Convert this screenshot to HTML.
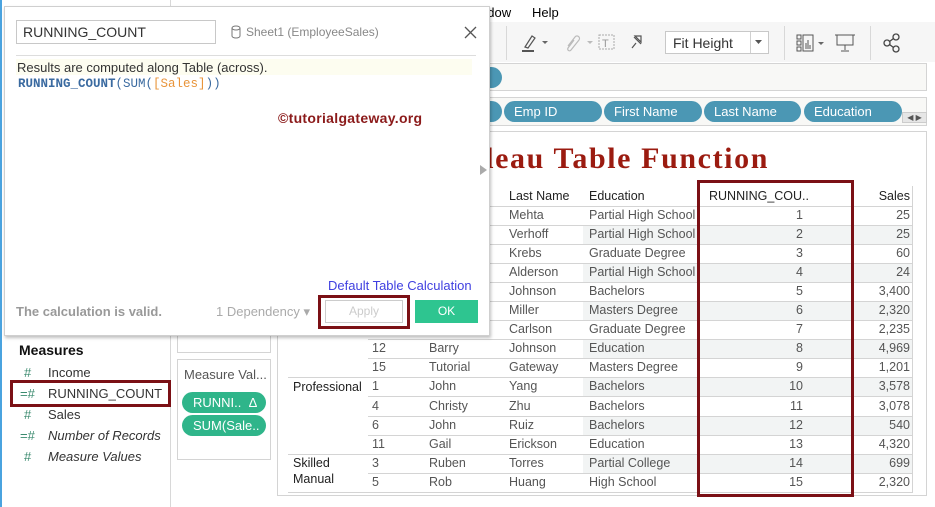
<!DOCTYPE html>
<html><head><meta charset="utf-8"><style>
*{margin:0;padding:0;box-sizing:border-box}
body{width:935px;height:507px;overflow:hidden;background:#fff;font-family:"Liberation Sans",sans-serif;position:relative;color:#333}
.a{position:absolute;white-space:nowrap}
.pill{position:absolute;background:#4b97b4;color:#fff;font-size:13px;border-radius:11px;height:21px;line-height:21px;padding-left:10px}
.gp{position:absolute;background:#2fb58a;color:#fff;font-size:13px;border-radius:11px;height:21px;line-height:21px;padding-left:11px;width:84px}
.c{position:absolute;font-size:12.5px;color:#555;white-space:nowrap}
.hl{position:absolute;height:1px;background:#d4d4d4}
.sh{position:absolute;background:#f2f4f4;height:18px}
</style></head><body>
<div class="a" style="left:0;top:0;width:2px;height:507px;background:#4aa3df"></div>
<div class="a" style="left:480px;top:5px;font-size:13px;color:#000">ndow</div>
<div class="a" style="left:532px;top:5px;font-size:13px;color:#000">Help</div>
<div class="a" style="left:490px;top:22px;width:445px;height:40px;background:#f6f6f6"></div>
<div class="a" style="left:506px;top:26px;width:1px;height:34px;background:#d8d8d8"></div>
<svg class="a" style="left:518px;top:30px" width="140" height="24" viewBox="0 0 140 24">
<path d="M7 17 L14 6 L17 8 L10 18 Z" fill="none" stroke="#555" stroke-width="1.2"/><rect x="4" y="20" width="12" height="2" fill="#555"/>
<path d="M24 11 l3 3 l3 -3z" fill="#666"/>
<path d="M50 16 l7 -9 a2.5 2.5 0 0 1 4 3 l-8 10 a1.6 1.6 0 0 1 -3 -2 l6 -8" fill="none" stroke="#bbb" stroke-width="1.2"/>
<path d="M69 11 l3 3 l3 -3z" fill="#bbb"/>
<rect x="81" y="5" width="15" height="14" fill="none" stroke="#aaa" stroke-dasharray="2 1"/><text x="84" y="17" font-size="11" fill="#999" font-family="Liberation Sans">T</text>
<path d="M114 18 l4 -5 m-2 -6 l7 7 m-6 -8 l6 0 l0 6 z" fill="none" stroke="#555" stroke-width="1.2"/>
</svg>
<div class="a" style="left:665px;top:31px;width:104px;height:23px;border:1px solid #c8c8c8;background:#fff;font-size:14px;color:#333;padding:3px 0 0 7px">Fit Height</div>
<div class="a" style="left:750px;top:32px;width:1px;height:21px;background:#d0d0d0"></div>
<svg class="a" style="left:754px;top:39px" width="10" height="6"><path d="M1 1h7l-3.5 4z" fill="#555"/></svg>
<div class="a" style="left:784px;top:26px;width:1px;height:34px;background:#d8d8d8"></div>
<svg class="a" style="left:795px;top:32px" width="70" height="22" viewBox="0 0 70 22">
<rect x="2" y="3" width="4" height="4" fill="none" stroke="#555"/><rect x="2" y="9" width="4" height="4" fill="none" stroke="#555"/><rect x="2" y="15" width="4" height="4" fill="none" stroke="#555"/>
<rect x="8" y="3" width="10" height="16" fill="none" stroke="#555"/><path d="M11 17v-6M13 17v-9M15 17v-4" stroke="#555"/>
<path d="M23 10l3 3l3-3z" fill="#666"/>
<rect x="42" y="3" width="16" height="10" fill="none" stroke="#555"/><path d="M40 3h20M50 13v5M46 19h8" stroke="#555"/>
</svg>
<div class="a" style="left:870px;top:26px;width:1px;height:34px;background:#d8d8d8"></div>
<svg class="a" style="left:883px;top:33px" width="20" height="20"><circle cx="13" cy="4" r="3" fill="none" stroke="#444" stroke-width="1.3"/><circle cx="4" cy="10" r="3" fill="none" stroke="#444" stroke-width="1.3"/><circle cx="13" cy="16" r="3" fill="none" stroke="#444" stroke-width="1.3"/><path d="M6.5 8.5l4-3M6.5 11.5l4 3" stroke="#444" stroke-width="1.3"/></svg>
<div class="a" style="left:480px;top:63px;width:447px;height:28px;background:#f8f8f6;border:1px solid #d4d4d4"></div>
<div class="a" style="left:480px;top:97px;width:447px;height:29px;background:#f8f8f6;border:1px solid #d4d4d4"></div>
<div class="pill" style="left:440px;top:67px;width:62px"></div>
<div class="pill" style="left:440px;top:101px;width:62px"></div>
<div class="pill" style="left:504px;top:101px;width:98px">Emp ID</div>
<div class="pill" style="left:604px;top:101px;width:98px">First Name</div>
<div class="pill" style="left:704px;top:101px;width:97px">Last Name</div>
<div class="pill" style="left:804px;top:101px;width:98px">Education</div>
<div class="a" style="left:902px;top:112px;width:25px;height:11px;background:#e6e6e6;border:1px solid #ccc;font-size:8px;color:#555;text-align:center;line-height:9px">◀ ▶</div>
<div class="a" style="left:170px;top:0;width:1px;height:507px;background:#d8d8d8"></div>
<div class="a" style="left:19px;top:342px;font-size:14px;font-weight:bold;color:#111">Measures</div>
<div class="a" style="left:24px;top:365px;font-size:13px;color:#3a8a6e">#</div><div class="a" style="left:48px;top:365px;font-size:13px;color:#333">Income</div>
<div class="a" style="left:20px;top:386px;font-size:13px;color:#3a8a6e">=#</div><div class="a" style="left:48px;top:386px;font-size:13px;color:#333">RUNNING_COUNT</div>
<div class="a" style="left:10px;top:380px;width:161px;height:27px;border:3px solid #7b1015"></div>
<div class="a" style="left:24px;top:407px;font-size:13px;color:#3a8a6e">#</div><div class="a" style="left:48px;top:407px;font-size:13px;color:#333">Sales</div>
<div class="a" style="left:20px;top:428px;font-size:13px;color:#3a8a6e">=#</div><div class="a" style="left:48px;top:428px;font-size:13px;color:#333;font-style:italic">Number of Records</div>
<div class="a" style="left:24px;top:449px;font-size:13px;color:#3a8a6e">#</div><div class="a" style="left:48px;top:449px;font-size:13px;color:#333;font-style:italic">Measure Values</div>
<div class="a" style="left:177px;top:300px;width:94px;height:53px;border:1px solid #d4d4d4"></div>
<div class="a" style="left:177px;top:359px;width:94px;height:101px;border:1px solid #d4d4d4"></div>
<div class="a" style="left:184px;top:367px;font-size:13px;color:#555">Measure Val...</div>
<div class="gp" style="left:182px;top:392px">RUNNI..&nbsp;&nbsp;Δ</div>
<div class="gp" style="left:182px;top:415px">SUM(Sale..</div>
<div class="a" style="left:277px;top:131px;width:1px;height:365px;background:#d4d4d4"></div>
<div class="a" style="left:277px;top:495px;width:650px;height:1px;background:#d4d4d4"></div>
<div class="a" style="left:926px;top:131px;width:1px;height:365px;background:#d4d4d4"></div>
<div class="a" style="left:278px;top:131px;width:648px;height:1px;background:#d4d4d4"></div>
<div class="a" style="right:166px;top:142px;font-family:'Liberation Serif',serif;font-weight:bold;font-size:30px;letter-spacing:1.6px;color:#9b1b10">Tableau Table Function</div>
<div class="c" style="left:509px;top:189px;color:#222">Last Name</div>
<div class="c" style="left:589px;top:189px;color:#222">Education</div>
<div class="c" style="left:709px;top:189px;color:#222">RUNNING_COU..</div>
<div class="c" style="left:800px;width:110px;text-align:right;top:189px;color:#222">Sales</div>
<div class="a" style="left:912px;top:186px;width:1px;height:306px;background:#d4d4d4"></div>
<div id="rows"></div>
<script>
var d=[["","","Mehta","Partial High School",1,"25"],["","","Verhoff","Partial High School",2,"25"],["","","Krebs","Graduate Degree",3,"60"],["","","Alderson","Partial High School",4,"24"],["","","Johnson","Bachelors",5,"3,400"],["","","Miller","Masters Degree",6,"2,320"],["","","Carlson","Graduate Degree",7,"2,235"],["12","Barry","Johnson","Education",8,"4,969"],["15","Tutorial","Gateway","Masters Degree",9,"1,201"],["1","John","Yang","Bachelors",10,"3,578"],["4","Christy","Zhu","Bachelors",11,"3,078"],["6","John","Ruiz","Bachelors",12,"540"],["11","Gail","Erickson","Education",13,"4,320"],["3","Ruben","Torres","Partial College",14,"699"],["5","Rob","Huang","High School",15,"2,320"]];
var h='';
h+='<div class="hl" style="left:368px;top:206px;width:545px"></div>';
for(var i=0;i<d.length;i++){var t=206+i*19.05,r=d[i];
if(i%2==1)h+='<div class="sh" style="left:583px;top:'+(t+1)+'px;width:329px"></div>';
var y=t+2;
h+='<div class="c" style="left:372px;top:'+y+'px">'+r[0]+'</div><div class="c" style="left:429px;top:'+y+'px">'+r[1]+'</div><div class="c" style="left:509px;top:'+y+'px">'+r[2]+'</div><div class="c" style="left:589px;top:'+y+'px">'+r[3]+'</div><div class="c" style="left:700px;width:103px;text-align:right;top:'+y+'px">'+r[4]+'</div><div class="c" style="left:800px;width:110px;text-align:right;top:'+y+'px">'+r[5]+'</div>';
var L=(i==8||i==12||i==14)?288:368;
h+='<div class="hl" style="left:'+L+'px;top:'+Math.round(t+19)+'px;width:'+(913-L)+'px"></div>';}
document.getElementById('rows').innerHTML=h;
</script>
<div class="c" style="left:293px;top:380px;color:#222">Professional</div>
<div class="c" style="left:293px;top:456px;color:#222">Skilled</div>
<div class="c" style="left:293px;top:472px;color:#222">Manual</div>
<div class="a" style="left:697px;top:180px;width:157px;height:317px;border:3px solid #7b1015"></div>
<div class="a" style="left:4px;top:6px;width:486px;height:330px;background:#fff;border:1px solid #cfcfcf;box-shadow:1px 2px 3px rgba(0,0,0,.25)">
<div class="a" style="left:11px;top:13px;width:200px;height:24px;border:1px solid #c8c8c8;font-size:14px;color:#333;padding:3px 0 0 6px">RUNNING_COUNT</div>
<svg class="a" style="left:226px;top:18px" width="10" height="14"><ellipse cx="5" cy="3" rx="4" ry="2" fill="none" stroke="#777"/><path d="M1 3v8a4 2 0 0 0 8 0v-8" fill="none" stroke="#777"/></svg>
<div class="a" style="left:241px;top:18px;font-size:12px;color:#888">Sheet1 (EmployeeSales)</div>
<svg class="a" style="left:459px;top:19px" width="13" height="13"><path d="M1 1l11 11M12 1l-11 11" stroke="#555" stroke-width="1.3"/></svg>
<div class="a" style="left:11px;top:48px;width:460px;height:1px;background:#ddd"></div>
<div class="a" style="left:11px;top:52px;width:456px;height:16px;background:#fdfdf0"></div>
<div class="a" style="left:12px;top:53px;font-size:13px;color:#333">Results are computed along Table (across).</div>
<div class="a" style="left:13px;top:70px;font-family:'Liberation Mono',monospace;font-size:12.5px;color:#3a6aa0"><b>RUNNING_COUNT</b>(SUM(<span style="color:#e8943a">[Sales]</span>))</div>
<div class="a" style="left:273px;top:103px;font-size:14px;font-weight:bold;color:#8b1a1a;letter-spacing:.3px">©tutorialgateway.org</div>
<div class="a" style="left:323px;top:271px;font-size:13px;color:#4040e0">Default Table Calculation</div>
<div class="a" style="left:11px;top:297px;font-size:13px;font-weight:bold;color:#999">The calculation is valid.</div>
<div class="a" style="left:211px;top:297px;font-size:13px;color:#aaa">1 Dependency ▾</div>
<div class="a" style="left:313px;top:288px;width:92px;height:34px;border:3px solid #7b1015"></div>
<div class="a" style="left:320px;top:293px;width:78px;height:23px;border:1px solid #ccc;font-size:12px;color:#ccc;text-align:center;line-height:21px">Apply</div>
<div class="a" style="left:410px;top:293px;width:63px;height:23px;background:#2ec590;font-size:12px;color:#fff;text-align:center;line-height:23px">OK</div>
</div>
<svg class="a" style="left:480px;top:165px" width="8" height="10"><path d="M0 0l7 5l-7 5z" fill="#aaa"/></svg>
</body></html>
